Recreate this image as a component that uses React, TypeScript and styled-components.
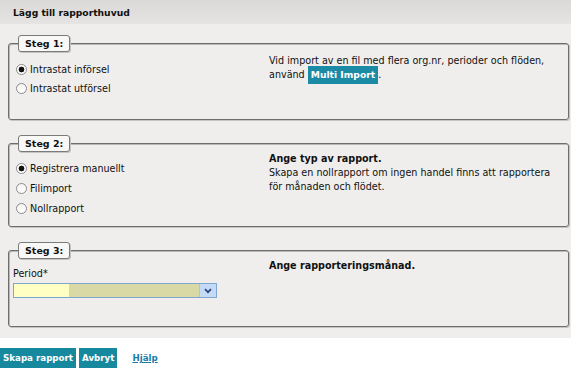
import styled, { createGlobalStyle } from 'styled-components';

const GlobalStyle = createGlobalStyle`
  html, body {
    margin: 0;
    padding: 0;
    background: #ffffff;
  }
  body {
    font-family: "DejaVu Sans", Verdana, sans-serif;
    font-size: 9.6px;
    color: #111;
  }
`;

interface IRadio {
  checked?: boolean;
}

interface IFieldset {
  boxH: number;
}

interface IPad {
  pad: number;
  gap?: number;
}

function RadioOption({ label, checked }: { label: string; checked?: boolean }) {
  return (
    <OptionRow>
      <RadioDot checked={checked} />
      <span>{label}</span>
    </OptionRow>
  );
}

function App() {
  return (
    <>
      <GlobalStyle />
      <Page>
        <Header>Lägg till rapporthuvud</Header>
        <Panel>
          <Step boxH={85}>
            <Legend>Steg 1:</Legend>
            <StepBody>
              <Options pad={10} gap={5}>
                <RadioOption label="Intrastat införsel" checked />
                <RadioOption label="Intrastat utförsel" />
              </Options>
              <Info pad={2}>
                <p>Vid import av en fil med flera org.nr, perioder och flöden,</p>
                <p>
                  använd <InlineButton>Multi Import</InlineButton>.
                </p>
              </Info>
            </StepBody>
          </Step>

          <Step boxH={92}>
            <Legend>Steg 2:</Legend>
            <StepBody>
              <Options pad={9} gap={6}>
                <RadioOption label="Registrera manuellt" checked />
                <RadioOption label="Filimport" />
                <RadioOption label="Nollrapport" />
              </Options>
              <Info pad={0}>
                <Strong>Ange typ av rapport.</Strong>
                <p>Skapa en nollrapport om ingen handel finns att rapportera</p>
                <p>för månaden och flödet.</p>
              </Info>
            </StepBody>
          </Step>

          <Step boxH={85}>
            <Legend>Steg 3:</Legend>
            <StepBody>
              <PeriodField>
                <PeriodLabel>Period*</PeriodLabel>
                <Select>
                  <SelectFill>
                    <SelectYellow />
                  </SelectFill>
                  <SelectArrow>
                    <svg width="8" height="6" viewBox="0 0 8 6">
                      <path d="M1 1.2 L4 4.2 L7 1.2" stroke="#27457e" strokeWidth="1.7" fill="none" />
                    </svg>
                  </SelectArrow>
                </Select>
              </PeriodField>
              <Info pad={0}>
                <Strong>Ange rapporteringsmånad.</Strong>
              </Info>
            </StepBody>
          </Step>
        </Panel>
        <Actions>
          <ActionButton>Skapa rapport</ActionButton>
          <ActionButton>Avbryt</ActionButton>
          <HelpLink href="#">Hjälp</HelpLink>
        </Actions>
      </Page>
    </>
  );
}

export default App;

const Page = styled.div`
  width: 577px;
  height: 368px;
  overflow: hidden;
  display: flex;
  flex-direction: column;
`;

const Header = styled.div`
  height: 24px;
  width: 571px;
  box-sizing: border-box;
  padding-left: 13px;
  display: flex;
  align-items: center;
  font-weight: bold;
  font-size: 9.2px;
  background: linear-gradient(#dad9d7, #e5e4e2);
`;

const Panel = styled.div`
  width: 571px;
  height: 314px;
  box-sizing: border-box;
  background: #efeeec;
  padding: 11px 2px 0 8px;
  display: flex;
  flex-direction: column;
  gap: 15px;
`;

const Step = styled.fieldset<IFieldset>`
  margin: 0;
  padding: 0 0 0 4px;
  height: ${({ boxH }) => boxH}px;
  flex-shrink: 0;
  box-sizing: border-box;
  border: 1px solid #6e6e6e;
  border-radius: 3px;
  box-shadow: inset 1px 1px 0 #b8b8b8, 1px 1px 0 #c4c4c4;
  min-width: 0;
`;

const Legend = styled.legend`
  margin-left: 5px;
  padding: 0 6px;
  height: 17px;
  box-sizing: border-box;
  font-weight: bold;
  font-size: 9.5px;
  line-height: 15px;
  border: 1px solid #7a7a7a;
  border-radius: 3px;
  background: #f8f8f7;
  box-shadow: 1px 1px 0 #c4c4c4;
`;

const StepBody = styled.div`
  display: grid;
  grid-template-columns: 256px 1fr;
`;

const Options = styled.div<IPad>`
  display: flex;
  flex-direction: column;
  gap: ${({ gap }) => gap ?? 6}px;
  padding-top: ${({ pad }) => pad}px;
  padding-left: 3px;
`;

const OptionRow = styled.div`
  display: flex;
  align-items: center;
  gap: 3px;
  height: 14px;
`;

const RadioDot = styled.span<IRadio>`
  width: 11px;
  height: 11px;
  box-sizing: border-box;
  border-radius: 50%;
  border: 1px solid #8c8c8c;
  background: ${({ checked }) =>
    checked
      ? 'radial-gradient(circle, #111 0 2.6px, #fff 3.2px)'
      : 'linear-gradient(#f4f4f4, #fff)'};
`;

const Info = styled.div<IPad>`
  padding-top: ${({ pad }) => pad}px;
  line-height: 14px;

  p {
    margin: 0;
  }
`;

const Strong = styled.div`
  font-weight: bold;
`;

const InlineButton = styled.span`
  display: inline-block;
  vertical-align: middle;
  margin: -2px 0;
  height: 18px;
  line-height: 18px;
  background: #1a8aa5;
  color: #fff;
  font-weight: bold;
  font-size: 9.2px;
  padding: 0 3px;
`;

const PeriodField = styled.div`
  display: flex;
  flex-direction: column;
  gap: 2px;
  padding-top: 8px;
`;

const PeriodLabel = styled.span`
  line-height: 14px;
`;

const Select = styled.div`
  width: 204px;
  height: 15px;
  box-sizing: border-box;
  border: 1px solid #7fa6cf;
  display: flex;
  background: #d8d9a4;
`;

const SelectFill = styled.div`
  flex: 1;
  display: flex;
`;

const SelectYellow = styled.div`
  width: 55px;
  background: #ffffc4;
`;

const SelectArrow = styled.div`
  width: 16px;
  display: flex;
  align-items: center;
  justify-content: center;
  background: #c4daf6;
  border-left: 1px solid #a9c4e4;
`;

const Actions = styled.div`
  display: flex;
  align-items: center;
  gap: 3px;
  padding-top: 10px;
`;

const ActionButton = styled.button`
  border: none;
  margin: 0;
  height: 20px;
  padding: 0 3px;
  background: #17899f;
  color: #fff;
  font-family: inherit;
  font-size: 8.7px;
  font-weight: bold;
`;

const HelpLink = styled.a`
  margin-left: 12px;
  color: #1a7da8;
  font-weight: bold;
  font-size: 8.7px;
`;
